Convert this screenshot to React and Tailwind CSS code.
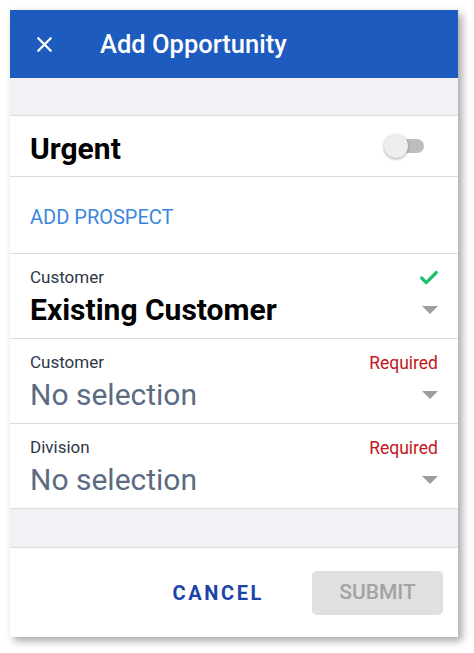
import { X, Check } from "lucide-react";

function Caret() {
  return (
    <svg width="16" height="9" viewBox="0 0 16 9" className="shrink-0">
      <path d="M0 0 L16 0 L8 8 Z" fill="#9e9e9e" />
    </svg>
  );
}

function SelectRow({ label, value, status, filled }) {
  return (
    <div className="h-[85px] px-5 pt-[14px] flex flex-col border-b border-[#dcdcdc] shrink-0">
      <div className="flex items-center justify-between h-[20px]">
        <span className="text-[17px] text-[#2d3748]">{label}</span>
        {status === "ok" ? (
          <Check size={22} strokeWidth={3.5} className="text-[#1fbf6a] mr-[-2px]" />
        ) : (
          <span className="text-[17.5px] text-[#c4161c]">Required</span>
        )}
      </div>
      <div className="flex items-center justify-between mt-[4px]">
        <span
          className={
            filled
              ? "text-[30px] font-bold text-black leading-[36px]"
              : "text-[30px] text-[#5b6b82] leading-[36px]"
          }
        >
          {value}
        </span>
        <Caret />
      </div>
    </div>
  );
}

export default function App() {
  return (
    <div className="min-h-[653px] bg-white pt-[10px] pl-[10px] font-['Roboto',sans-serif]">
      <div className="w-[448px] h-[627px] bg-white flex flex-col shadow-[4px_4px_8px_rgba(0,0,0,0.35)]">
        <div className="h-[68px] bg-[#1e5bbf] flex items-center text-white shrink-0">
          <X size={25} strokeWidth={2.2} className="ml-[22px]" />
          <span className="ml-[43px] text-[25.5px] font-medium">Add Opportunity</span>
        </div>
        <div className="h-[38px] bg-[#f1f2f6] border-b border-[#dcdcdc] shrink-0" />
        <div className="h-[61px] px-5 pt-[4px] flex items-center justify-between border-b border-[#dcdcdc] shrink-0">
          <span className="text-[30px] font-bold text-black">Urgent</span>
          <div className="relative w-[34px] h-[14px] mr-[14px] -mt-[4px]">
            <div className="absolute inset-0 rounded-full bg-[#bdbdbd]" />
            <div className="absolute left-[-6px] top-[-5px] w-[24px] h-[24px] rounded-full bg-[#eeeeee] shadow-[0_1px_3px_rgba(0,0,0,0.35)]" />
          </div>
        </div>
        <div className="h-[77px] px-5 pt-[3px] flex items-center border-b border-[#dcdcdc] shrink-0">
          <span className="text-[20px] text-[#3a86e0]">ADD PROSPECT</span>
        </div>
        <SelectRow label="Customer" value="Existing Customer" status="ok" filled />
        <SelectRow label="Customer" value="No selection" status="req" />
        <SelectRow label="Division" value="No selection" status="req" />
        <div className="h-[39px] bg-[#f1f2f6] border-b border-[#dcdcdc] shrink-0" />
        <div className="flex-1 flex items-center justify-end gap-[48px] pr-[15px]">
          <span className="text-[20px] font-bold tracking-[2.6px] text-[#1a44a8]">CANCEL</span>
          <div className="w-[131px] h-[44px] rounded-[5px] bg-[#e0e0e0] flex items-center justify-center">
            <span className="text-[21px] font-medium text-[#a3a3a3]">SUBMIT</span>
          </div>
        </div>
      </div>
    </div>
  );
}
